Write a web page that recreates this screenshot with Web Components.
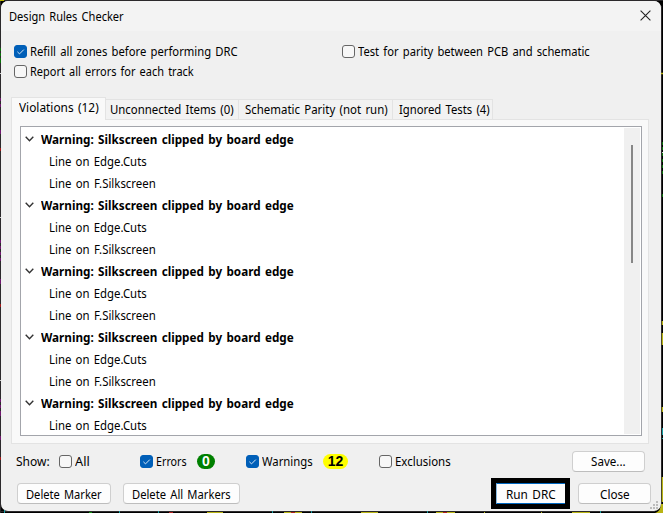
<!DOCTYPE html>
<html lang="en"><head><meta charset="utf-8"><title>Design Rules Checker</title>
<style>
html,body{margin:0;width:663px;height:513px;overflow:hidden;background:#000}
body{font:13px/16px "Noto Sans","Open Sans",sans-serif;color:#000}
</style></head><body>
<drc-app></drc-app>
<script>
const define=(name,html,init)=>customElements.define(name,class extends HTMLElement{
  connectedCallback(){
    if(this.shadowRoot)return;
    this.attachShadow({mode:'open'}).innerHTML=html;
    if(init)init.call(this,this.shadowRoot);
  }
});

/* Text condensed to a given ink width */
define('fit-text',`<style>
:host{display:block;flex:none;height:16px;white-space:nowrap}
span{display:inline-block;transform-origin:0 50%;white-space:nowrap;line-height:16px;word-spacing:1.5px;margin-left:-.5px}
</style><span><slot></slot></span>`,function(r){
  const w=+this.getAttribute('w');this.style.width=w+'px';
  const s=r.querySelector('span');
  s.style.transform='scaleX('+(w+.7)/s.getBoundingClientRect().width+')';
});

define('check-box',`<style>
:host{display:flex;align-items:center;gap:3px;height:20px;flex:none}
i{box-sizing:border-box;width:13px;height:13px;border:1px solid #666;border-radius:3px;background:#f7f7f7;display:block;flex:none}
svg{display:none}
:host([checked]) i{background:#005fb8;border-color:#005fb8}
:host([checked]) svg{display:block;margin:-1px}
</style><i><svg width="13" height="13"><path d="M3.4 6.8l2.1 2.1 4.3-4.3" fill="none" stroke="#d4e6f6" stroke-width="1"/></svg></i><slot></slot>`);

define('push-button',`<style>
:host{box-sizing:border-box;display:flex;flex:none;align-items:center;justify-content:center;height:21px;border:1px solid #cfcfcf;border-bottom-color:#bdbdbd;border-radius:4px;background:#fdfdfd}
:host([primary]){border:1px solid #0067c0;border-width:1px 0 1px 1px;border-left-color:#8abbe2;border-radius:0;box-shadow:0 0 0 5px #000}
</style><slot></slot>`,function(){this.style.width=this.getAttribute('w')+'px'});

define('count-badge',`<style>
:host{display:flex;flex:none;align-items:center;justify-content:center;height:15px;border-radius:8px;font:bold 14px/15px "Liberation Sans",Arial,sans-serif}
</style><slot></slot>`);

define('title-bar',`<style>
:host{box-sizing:border-box;display:flex;align-items:center;justify-content:space-between;height:30px;padding:0 10px 0 8px;background:#f3f3f3}
svg{display:block;margin-top:-2px}
</style><fit-text w="114">Design Rules Checker</fit-text><svg width="11" height="11"><path d="M.6.6l9.8 9.8M10.4.6L.6 10.4" stroke="#222" stroke-width="1.1"/></svg>`);

define('tab-item',`<style>
:host{box-sizing:border-box;display:block;flex:none;height:20px;border:1px solid #e3e3e3;border-width:1px 1px 0 0;background:#f2f2f2;padding:1px 0 0 6px}
:host([active]){height:23px;border-left-width:1px;background:#f9f9f9;padding:1px 0 0 7px;margin-bottom:-1px}
</style><slot></slot>`,function(){this.style.width=this.getAttribute('w')+'px'});

define('violation-group',`<style>
:host{display:block}
div{height:22px;display:flex;align-items:center}
.h{gap:7px;padding-left:3px;font-weight:bold}
.c{padding-left:27px}
:host([partial]) .c:last-child{display:none}
svg{display:block;flex:none}
</style>
<div class="h"><svg width="9" height="6"><path d="M.7.8l3.8 3.9L8.3.8" fill="none" stroke="#333" stroke-width="1.4"/></svg><fit-text w="252">Warning: Silkscreen clipped by board edge</fit-text></div>
<div class="c"><fit-text w="97">Line on Edge.Cuts</fit-text></div>
<div class="c"><fit-text w="106">Line on F.Silkscreen</fit-text></div>`);

define('violation-list',`<style>
:host{box-sizing:border-box;display:flex;height:310px;border:1px solid #a3a5ab;background:#fff;padding:1px;overflow:hidden}
.rows{flex:1;height:306px;overflow:hidden}
.bar{box-sizing:border-box;width:16px;height:306px;background:#f0f0f0;padding:17px 0 0 7px}
.thumb{width:2px;height:118px;background:#868686}
</style><div class="rows">${'<violation-group></violation-group>'.repeat(4)}<violation-group partial></violation-group></div><div class="bar"><div class="thumb"></div></div>`);

define('tab-panel',`<style>
:host{display:block;width:638px;margin-left:10px}
nav{display:flex;align-items:flex-end;height:22px;position:relative;z-index:1}
section{box-sizing:border-box;height:325px;border:1px solid #e3e3e3;background:#f9f9f9;padding:6px 6px 7px 8px}
</style><nav>
<tab-item active w="95"><fit-text w="79">Violations (12)</fit-text></tab-item>
<tab-item w="133" style="padding-left:4px"><fit-text w="123">Unconnected Items (0)</fit-text></tab-item>
<tab-item w="154"><fit-text w="142">Schematic Parity (not run)</fit-text></tab-item>
<tab-item w="100"><fit-text w="90">Ignored Tests (4)</fit-text></tab-item>
</nav><section><violation-list></violation-list></section>`);

define('drc-app',`<style>
:host{display:block;position:relative;width:663px;height:513px;background:#000}
.board{position:absolute;inset:0;display:block}
main{box-sizing:border-box;position:relative;left:1px;top:1px;width:660px;height:510px;border-radius:7px;overflow:hidden;background:#f0f0f0;display:flex;flex-direction:column}
.options{box-sizing:border-box;height:66px;display:grid;grid-template-columns:328px auto;grid-auto-rows:20px;padding:10px 13px 0;flex:none}
.show{height:20px;display:flex;align-items:center;margin-top:7px;padding-left:15px}
.actions{height:21px;display:flex;margin-top:12px;padding-left:16px}
.grip{position:absolute;right:3px;bottom:2px}
</style>
<svg class="board" width="663" height="513">
<path d="M0 .5H663M.5 0V513M661.500 6V505M0 511.500H655" stroke="#2b292b" stroke-width="1"/>
<path d="M0 .5h4" stroke="#bdb800"/>
<path d="M662.5 142v3m0 2v3m0 3v3m0 3v3m0 3v3m0 3v3m0 20v3M.5 48v3m0 2v3m0 2v5" stroke="#077007"/>
<path d="M.5 98v3m0 3v3m0 23v4m0 106v3m0 3v3m0 3v3m0 3v3m0 18v5m0 115v3m0 3v3m0 3v5m0 20v4" stroke="#6e166e"/>
<path d="M.5 148v3m0 153v3m0 150v3" stroke="#a01818"/>
<path d="M0 73.500h1M0 217.500h1M0 380.500h1M662 152.500h1" stroke="#ccc"/>
<path d="M662.5 321v4m0 8v12m0 62v5m0 65v25M661 73.500h2" stroke="#b9b414" stroke-width="1.500"/>
<path d="M662.5 428v7m0 3v1M4.500 510v3M119.500 511v2M158.500 511v2M272.500 511v2M311.500 511v2M427.500 511v2M600.500 511v2" stroke="#139aa0"/>
<path d="M207 512.500h16M284 512.500h18M361 512.500h17M436 512.500h19M572 512.500h18M484 512.500h1M541 512.500h1" stroke="#b9b414"/>
<path d="M89 512.500h3" stroke="#089108"/><path d="M169 512.500h4M291 512.500h4M443 512.500h4" stroke="#b01c1c"/>
<path d="M655 513q6-2 6-9h2v9z" fill="#b9b414"/>
</svg>
<main><title-bar></title-bar>
<div class="options">
<check-box checked><fit-text w="207">Refill all zones before performing DRC</fit-text></check-box>
<check-box><fit-text w="231">Test for parity between PCB and schematic</fit-text></check-box>
<check-box><fit-text w="163">Report all errors for each track</fit-text></check-box>
</div>
<tab-panel></tab-panel>
<div class="show"><fit-text w="33">Show:</fit-text>
<check-box style="margin-left:10px"><fit-text w="14">All</fit-text></check-box>
<check-box checked style="margin-left:51px"><fit-text w="30">Errors</fit-text></check-box>
<count-badge style="width:18px;margin-left:11px;background:#008000;color:#fff">0</count-badge>
<check-box checked style="margin-left:31px"><fit-text w="50">Warnings</fit-text></check-box>
<count-badge style="width:25px;margin-left:11px;background:#ff0">12</count-badge>
<check-box style="margin-left:31px"><fit-text w="55">Exclusions</fit-text></check-box>
<push-button w="73" style="margin-left:122px"><fit-text w="34">Save...</fit-text></push-button></div>
<div class="actions">
<push-button w="94"><fit-text w="75">Delete Marker</fit-text></push-button>
<push-button w="117" style="margin-left:12px"><fit-text w="98">Delete All Markers</fit-text></push-button>
<push-button primary w="69" style="margin-left:256px"><fit-text w="49">Run DRC</fit-text></push-button>
<push-button w="73" style="margin-left:13px"><fit-text w="29">Close</fit-text></push-button></div>
<svg class="grip" width="8" height="8"><path d="M6 0h2v2h-2zM3 3h2v2h-2zM6 3h2v2h-2zM0 6h2v2h-2zM3 6h2v2h-2zM6 6h2v2h-2z" fill="#bcbcbc"/></svg>
</main>`);
</script></body></html>
